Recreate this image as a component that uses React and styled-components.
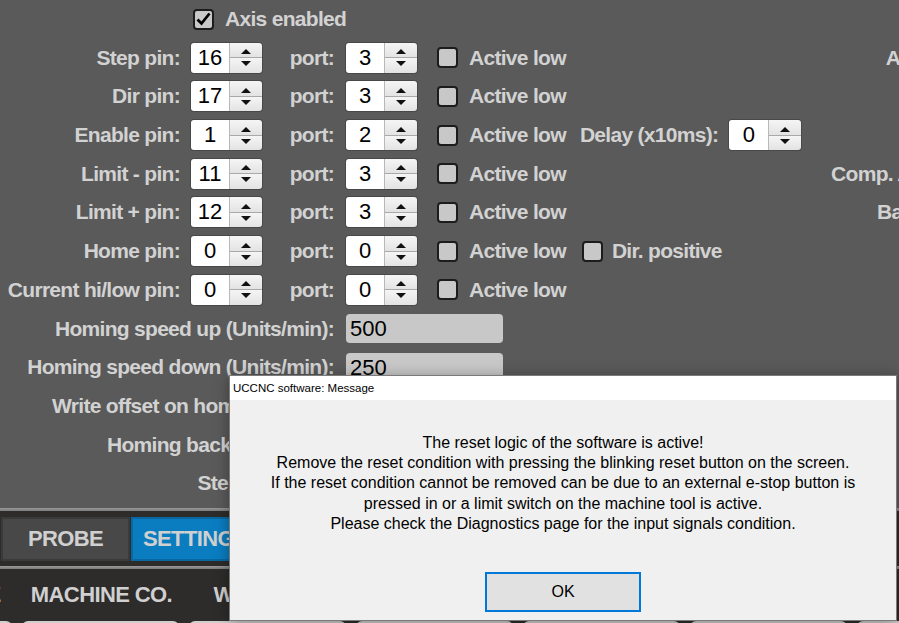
import React from 'react';
import styled, { createGlobalStyle } from 'styled-components';

const GlobalStyle = createGlobalStyle`
  html, body {
    margin: 0;
    padding: 0;
    background: #5a5a5a;
    overflow: hidden;
  }
`;

const Screen = styled.div`
  position: relative;
  width: 899px;
  height: 623px;
  overflow: hidden;
  display: flex;
  flex-direction: column;
  background: #5a5a5a;
  font-family: "Liberation Sans", Arial, sans-serif;
`;

const ConfigArea = styled.div`
  height: 508px;
  flex-shrink: 0;
  display: flex;
  padding-top: 4px;
  box-sizing: border-box;
`;

const Column = styled.div`
  display: flex;
  flex-direction: column;
  gap: 8.7px;
  flex-shrink: 0;
  width: ${p => p.$w}px;
`;

const Row = styled.div`
  display: flex;
  align-items: center;
  height: 30px;
  flex-shrink: 0;
  justify-content: ${p => (p.$end ? 'flex-end' : 'flex-start')};
`;

const Label = styled.span`
  flex-shrink: 0;
  width: ${p => (p.$w ? `${p.$w}px` : 'auto')};
  margin-left: ${p => p.$ml || 0}px;
  text-align: right;
  white-space: nowrap;
  font-size: 21px;
  font-weight: bold;
  letter-spacing: -0.7px;
  color: #d2d2d2;
`;

const Spin = styled.div`
  display: flex;
  width: ${p => p.$w || 71}px;
  height: 30px;
  margin-left: ${p => p.$ml || 0}px;
  flex-shrink: 0;
  border-radius: 3px;
  overflow: hidden;
  box-shadow: 0 0 0 1px rgba(0, 0, 0, 0.2);
`;

const SpinField = styled.div`
  flex: 1;
  background: #fff;
  color: #000;
  font-size: 22px;
  line-height: 30px;
  text-align: center;
`;

const SpinButtons = styled.div`
  width: 32px;
  display: flex;
  flex-direction: column;
  border-left: 1px solid #b8b8b8;
`;

const SpinHalf = styled.div`
  flex: 1;
  display: flex;
  justify-content: center;
  align-items: ${p => (p.$down ? 'flex-start' : 'flex-end')};
  padding: ${p => (p.$down ? '3px 0 0' : '0 0 3px')};
  background: linear-gradient(#f5f5f5, #e3e3e3);
  border-top: ${p => (p.$down ? '1px solid #a9a9a9' : 'none')};
`;

const Box = styled.span`
  width: 21px;
  height: 21px;
  box-sizing: border-box;
  flex-shrink: 0;
  margin-left: ${p => p.$ml || 0}px;
  border: 2px solid #1c1c1c;
  border-radius: 4px;
  background: #c8c8c8;
  display: flex;
  align-items: center;
  justify-content: center;
`;

const ValueField = styled.div`
  width: 157px;
  height: 29px;
  margin-left: 12px;
  flex-shrink: 0;
  box-sizing: border-box;
  padding-left: 4px;
  background: #c8c8c8;
  border-radius: 4px;
  color: #000;
  font-size: 22px;
  line-height: 30px;
`;

const Rule = styled.div`
  height: 3px;
  flex-shrink: 0;
  background: linear-gradient(#9a9a9a, #7a7a7a);
`;

const Dock = styled.div`
  flex: 1;
  display: flex;
  flex-direction: column;
  background: #2d2c2b;
`;

const TabRow = styled.div`
  display: flex;
  gap: 1px;
  padding: 6px 0 5px 1px;
`;

const TabButton = styled.div`
  width: 129px;
  height: 44px;
  flex-shrink: 0;
  box-sizing: border-box;
  display: flex;
  align-items: center;
  justify-content: center;
  font-size: 22px;
  font-weight: bold;
  letter-spacing: -0.6px;
  color: #d0d0d0;
  background: ${p => (p.$active ? '#0a7dc1' : '#484848')};
  border: 2px solid ${p => (p.$active ? '#0868a3' : '#3a3a3a')};
`;

const NavRow = styled.div`
  display: flex;
  gap: 10px;
  height: 52px;
  margin-left: -144px;
  flex-shrink: 0;
`;

const NavItem = styled.div`
  width: 157px;
  flex-shrink: 0;
  display: flex;
  align-items: center;
  justify-content: center;
  white-space: nowrap;
  font-size: 22px;
  font-weight: bold;
  letter-spacing: -0.6px;
  color: #d0d0d0;
`;

const KeyRow = styled.div`
  display: flex;
  gap: 10px;
  margin-left: -145px;
`;

const Key = styled.div`
  width: 157px;
  height: 30px;
  flex-shrink: 0;
  border-radius: 6px;
  background: #cfcfcf;
`;

const Dialog = styled.div`
  position: absolute;
  left: 229px;
  top: 375px;
  width: 668px;
  height: 246px;
  box-sizing: border-box;
  display: flex;
  flex-direction: column;
  border: 1px solid #7a7a7a;
  background: #f0f0f0;
  box-shadow: 0 2px 14px rgba(0, 0, 0, 0.35);
`;

const TitleBar = styled.div`
  height: 24px;
  flex-shrink: 0;
  padding-left: 3px;
  background: #fff;
  color: #000;
  font-size: 11.5px;
  line-height: 24px;
`;

const DialogBody = styled.div`
  flex: 1;
  display: flex;
  flex-direction: column;
  align-items: center;
  padding: 33px 0 8px;
`;

const Message = styled.div`
  color: #000;
  font-size: 16px;
  line-height: 20.2px;
  text-align: center;
`;

const OkButton = styled.button`
  margin-top: auto;
  width: 156px;
  height: 40px;
  border: 2px solid #0078d7;
  background: #e1e1e1;
  color: #000;
  font-family: "Liberation Sans", Arial, sans-serif;
  font-size: 16px;
`;

function Arrow({ down }) {
  return (
    <svg width="10" height="5" viewBox="0 0 10 5">
      <polygon points={down ? '0,0 10,0 5,5' : '5,0 10,5 0,5'} fill="#111" />
    </svg>
  );
}

function SpinBox({ value, w, ml }) {
  return (
    <Spin $w={w} $ml={ml}>
      <SpinField>{value}</SpinField>
      <SpinButtons>
        <SpinHalf><Arrow /></SpinHalf>
        <SpinHalf $down><Arrow down /></SpinHalf>
      </SpinButtons>
    </Spin>
  );
}

function Check({ checked, ml }) {
  return (
    <Box $ml={ml}>
      {checked && (
        <svg width="15" height="14" viewBox="0 0 15 14">
          <path d="M1.5 7.5 L5.5 11.5 L13.5 1.5" fill="none" stroke="#000" strokeWidth="2.8" />
        </svg>
      )}
    </Box>
  );
}

const pins = [
  { label: 'Step pin:', pin: 16, port: 3 },
  { label: 'Dir pin:', pin: 17, port: 3 },
  { label: 'Enable pin:', pin: 1, port: 2, delay: true },
  { label: 'Limit - pin:', pin: 11, port: 3 },
  { label: 'Limit + pin:', pin: 12, port: 3 },
  { label: 'Home pin:', pin: 0, port: 0, dir: true },
  { label: 'Current hi/low pin:', pin: 0, port: 0 },
];

const homing = [
  { label: 'Homing speed up (Units/min):', value: '500' },
  { label: 'Homing speed down (Units/min):', value: '250' },
  { label: 'Write offset on home position:', value: '0' },
  { label: 'Homing back off (Units):', value: '0' },
  { label: 'Steps per unit:', value: '200' },
];

const rightLabels = [
  '',
  'Acceleration (Units/sec^2):',
  '',
  '',
  'Comp. Acceleration (Units/sec2):',
  'Backlash speed (Units/sec):',
];

export default function App() {
  return (
    <Screen>
      <GlobalStyle />
      <ConfigArea>
        <Column $w={830}>
          <Row>
            <Check checked ml={193} />
            <Label $ml={11}>Axis enabled</Label>
          </Row>
          {pins.map(p => (
            <Row key={p.label}>
              <Label $w={180}>{p.label}</Label>
              <SpinBox value={p.pin} ml={11} />
              <Label $w={72}>port:</Label>
              <SpinBox value={p.port} ml={12} />
              <Check ml={20} />
              <Label $ml={11}>Active low</Label>
              {p.delay && (
                <>
                  <Label $ml={14}>Delay (x10ms):</Label>
                  <SpinBox value={0} w={72} ml={11} />
                </>
              )}
              {p.dir && (
                <>
                  <Check ml={16} />
                  <Label $ml={9}>Dir. positive</Label>
                </>
              )}
            </Row>
          ))}
          {homing.map(h => (
            <Row key={h.label}>
              <Label $w={334}>{h.label}</Label>
              <ValueField>{h.value}</ValueField>
            </Row>
          ))}
        </Column>
        <Column $w={307}>
          {rightLabels.map((t, i) => (
            <Row key={i} $end>
              <Label>{t}</Label>
            </Row>
          ))}
        </Column>
      </ConfigArea>
      <Rule />
      <Dock>
        <TabRow>
          <TabButton>PROBE</TabButton>
          <TabButton $active>SETTINGS</TabButton>
          <TabButton>DIAGNOSTICS</TabButton>
        </TabRow>
        <Rule />
        <NavRow>
          <NavItem>TOOL TABLE</NavItem>
          <NavItem>MACHINE CO.</NavItem>
          <NavItem>WORK CO.</NavItem>
          <NavItem>OFFSETS</NavItem>
          <NavItem>AXIS</NavItem>
          <NavItem>IO</NavItem>
        </NavRow>
        <KeyRow>
          {[0, 1, 2, 3, 4, 5, 6].map(k => <Key key={k} />)}
        </KeyRow>
      </Dock>
      <Dialog>
        <TitleBar>UCCNC software: Message</TitleBar>
        <DialogBody>
          <Message>
            The reset logic of the software is active!<br />
            Remove the reset condition with pressing the blinking reset button on the screen.<br />
            If the reset condition cannot be removed can be due to an external e-stop button is<br />
            pressed in or a limit switch on the machine tool is active.<br />
            Please check the Diagnostics page for the input signals condition.
          </Message>
          <OkButton>OK</OkButton>
        </DialogBody>
      </Dialog>
    </Screen>
  );
}
